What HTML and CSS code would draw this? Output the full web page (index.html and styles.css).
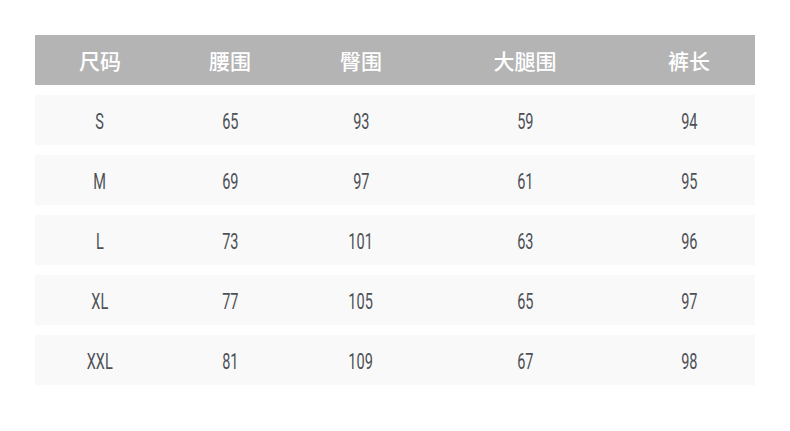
FILE: index.html
```html
<!DOCTYPE html>
<html>
<head>
<meta charset="utf-8">
<link rel="stylesheet" href="styles.css">
</head>
<body>
<div class="table">
  <div class="row head"><div>尺码</div><div>腰围</div><div>臀围</div><div>大腿围</div><div>裤长</div></div>
  <div class="row"><div><span>S</span></div><div><span>65</span></div><div><span>93</span></div><div><span>59</span></div><div><span>94</span></div></div>
  <div class="row"><div><span>M</span></div><div><span>69</span></div><div><span>97</span></div><div><span>61</span></div><div><span>95</span></div></div>
  <div class="row"><div><span>L</span></div><div><span>73</span></div><div><span>101</span></div><div><span>63</span></div><div><span>96</span></div></div>
  <div class="row"><div><span>XL</span></div><div><span>77</span></div><div><span>105</span></div><div><span>65</span></div><div><span>97</span></div></div>
  <div class="row"><div><span>XXL</span></div><div><span>81</span></div><div><span>109</span></div><div><span>67</span></div><div><span>98</span></div></div>
</div>
</body>
</html>
```
FILE: styles.css
```css
html, body { margin: 0; padding: 0; background: #fff; }
body { width: 790px; height: 431px; }
.table {
  margin: 35px 0 0 35px;
  width: 720px;
  display: flex;
  flex-direction: column;
  gap: 10px;
}
.row {
  display: grid;
  grid-template-columns: 130px 130px 132px 196px 132px;
  height: 50px;
  background: #f9f9f9;
  align-items: center;
  text-align: center;
  font-family: Roboto, sans-serif;
  font-size: 22px;
  font-weight: 400;
  color: #4d5055;
}
.row span {
  display: inline-block;
  padding-top: 2px;
  transform: scaleX(0.66);
}
.row.head {
  background: #b4b4b5;
  color: #fff;
  font-family: "Noto Sans CJK SC", sans-serif;
  font-size: 21px;
  font-weight: 500;
}
```
